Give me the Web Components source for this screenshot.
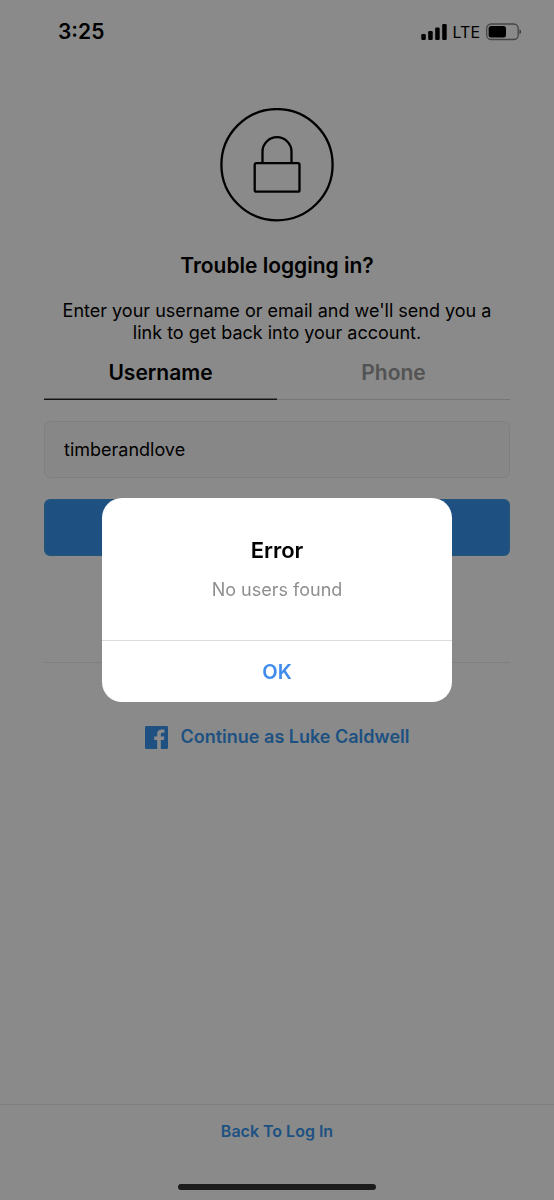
<!DOCTYPE html>
<html lang="en">
<head>
<meta charset="utf-8">
<meta name="viewport" content="width=device-width, initial-scale=1">
<title>Trouble logging in?</title>
<style>
html, body { margin: 0; }
body { font-family: Inter, "Liberation Sans", sans-serif; background: #fff; color: #000; }
</style>
</head>
<body>
<recover-page></recover-page>
<script>
function define(name, html, setup) {
  const template = document.createElement('template');
  template.innerHTML = '<style>*{box-sizing:border-box}</style>' + html;
  customElements.define(name, class extends HTMLElement {
    connectedCallback() {
      if (this.shadowRoot) return;
      this.attachShadow({ mode: 'open' }).append(template.content.cloneNode(true));
      if (setup) setup(this, this.shadowRoot);
    }
  });
}

define('status-bar', `
<style>
:host { display: flex; justify-content: space-between; align-items: center; height: 64px; padding: 0 32px 0 58px; }
.time { font-size: 21px; line-height: 28px; font-weight: 600; }
.right { display: flex; align-items: center; gap: 6px; font-size: 16px; line-height: 20px; font-weight: 400; }
svg { display: block; }
</style>
<span class="time">3:25</span>
<span class="right">
  <svg width="26" height="18" viewBox="0 0 26 18" aria-hidden="true">
    <rect x="0.300" y="11" width="4.500" height="6" rx="1.300"/><rect x="7.200" y="8" width="4.500" height="9" rx="1.300"/>
    <rect x="14.200" y="4.500" width="4.500" height="12.500" rx="1.300"/><rect x="21.200" y="1" width="4.500" height="16" rx="1.300"/>
  </svg>
  <span>LTE</span>
  <svg width="36" height="18" viewBox="0 0 36 18" aria-hidden="true">
    <rect x="0.700" y="1" width="31.500" height="15.500" rx="4.500" fill="none" stroke="#000" stroke-opacity=".5" stroke-width="1.300"/>
    <rect x="2.600" y="3" width="17.400" height="11.500" rx="2.500"/>
    <path d="M33.500 6.300c2 .8 2 4.200 0 5z" fill-opacity=".6"/>
  </svg>
</span>`);

define('lock-badge', `
<style>:host { display: block; } svg { display: block; }</style>
<svg width="114" height="114" viewBox="0 0 114 114" fill="none" stroke="#000" stroke-width="2.300" aria-hidden="true">
  <circle cx="57" cy="56.700" r="55.600"/>
  <rect x="34.700" y="55.200" width="44.800" height="28.500" rx="1.500"/>
  <path d="M42.500 55.200V43.700a14.500 14.500 0 0 1 29 0V55.200"/>
</svg>`);

define('tab-item', `
<style>
:host { display: block; flex: 1; }
button { display: block; width: 100%; height: 56px; padding: 2px 0 0; border: 0; border-bottom: 1px solid #dbdbdb; background: none; font-family: inherit; font-size: 21px; font-weight: 600; line-height: 52px; color: #999; }
:host([selected]) button { color: #000; border-bottom-color: #262626; box-shadow: inset 0 -1px #999; }
</style>
<button type="button" role="tab"><slot></slot></button>`, (host, root) => {
  root.querySelector('button').setAttribute('aria-selected', host.hasAttribute('selected'));
});

define('link-action', `
<style>
:host { display: block; }
a { display: flex; align-items: center; justify-content: center; gap: 13px; color: #3897f0; text-decoration: none; font-size: var(--link-size, 18px); line-height: 24px; font-weight: 600; }
</style>
<a href="#"><slot name="icon"></slot><slot></slot></a>`);

define('facebook-icon', `
<style>:host { display: block; } svg { display: block; }</style>
<svg width="23" height="23" viewBox="0 0 23 23" fill="#3897f0" aria-hidden="true">
  <path d="M1.300 0H21.700Q23 0 23 1.300V21.700Q23 23 21.700 23H15.800V14.100H18.800L19.300 10.600H15.800V8.400C15.800 7.400 16.100 6.700 17.500 6.700H19.400V3.600C19.100 3.500 18 3.400 16.700 3.400C14 3.400 12.200 5 12.200 8V10.600H9.200V14.100H12.200V23H1.300Q0 23 0 21.700V1.300Q0 0 1.300 0Z"/>
</svg>`);

define('recover-form', `
<style>
:host { display: block; }
form { display: grid; gap: 21px; padding-top: 21px; }
input { width: 100%; height: 57px; border: 1px solid #ebebeb; border-radius: 6px; background: #fafafa; padding: 0 19px; font: inherit; font-size: 18px; color: #000; outline: 0; }
button { height: 57px; border: 2px solid #3d9ae8; border-radius: 6px; background: #3994ef; }
</style>
<form>
  <input type="text" value="timberandlove" aria-label="Username or email">
  <button type="button" aria-label="Next"></button>
</form>`);

define('alert-dialog', `
<style>
:host { position: fixed; inset: 0; display: grid; place-items: center; background: rgba(0,0,0,.46); }
section { width: min(350px, 90%); background: #fff; border-radius: 20px; overflow: hidden; text-align: center; }
.body { padding: 38px 24px; }
h2 { margin: 0 0 14px; font-size: 22px; line-height: 28px; font-weight: 600; }
p { margin: 0; font-size: 18px; line-height: 24px; color: #8e8e8e; }
button { display: block; width: 100%; height: 62px; border: 0; border-top: 1px solid #dbdbdb; background: none; font-family: inherit; font-size: 20px; line-height: 24px; font-weight: 600; color: #3f8cec; }
</style>
<section role="alertdialog" aria-modal="true" aria-labelledby="t" aria-describedby="d">
  <div class="body"><h2 id="t"><slot name="title"></slot></h2><p id="d"><slot></slot></p></div>
  <button type="button"><slot name="action"></slot></button>
</section>`);

define('page-footer', `
<style>
:host { display: flex; flex-direction: column; align-items: center; border-top: 1px solid #ebebeb; padding: 14px 0 10px; --link-size: 16px; }
.home { width: 198px; height: 6px; margin-top: 41px; border-radius: 3px; background: #333; }
</style>
<link-action>Back To Log In</link-action>
<div class="home"></div>`);

define('recover-page', `
<style>
:host { display: flex; flex-direction: column; min-height: 100vh; }
main { display: flex; flex-direction: column; padding: 44px 44px 0; }
lock-badge { align-self: center; }
h1 { margin: 30px 0 20px; text-align: center; font-size: 21px; line-height: 28px; font-weight: 600; }
p { max-width: 430px; margin: 0 auto; text-align: center; font-size: 18px; line-height: 22px; }
.tabs { display: flex; align-items: flex-end; }
hr { width: 100%; height: 1px; margin: 106px 0 62px; border: 0; background: #ebebeb; }
page-footer { margin-top: auto; }
</style>
<status-bar></status-bar>
<main>
  <lock-badge></lock-badge>
  <h1>Trouble logging in?</h1>
  <p>Enter your username or email and we'll send you a link to get back into your account.</p>
  <div class="tabs" role="tablist"><tab-item selected>Username</tab-item><tab-item>Phone</tab-item></div>
  <recover-form></recover-form>
  <hr>
  <link-action><facebook-icon slot="icon"></facebook-icon>Continue as Luke Caldwell</link-action>
</main>
<page-footer></page-footer>
<alert-dialog><span slot="title">Error</span>No users found<span slot="action">OK</span></alert-dialog>`);
</script>
</body>
</html>
